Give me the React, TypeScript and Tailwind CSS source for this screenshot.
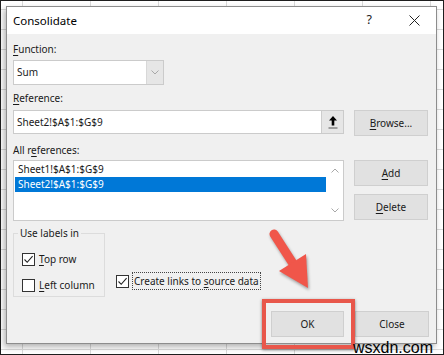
const ui = { fontFamily: '"Noto Sans", "Open Sans", sans-serif' };

function U({ children }: { children: string }) {
    return <span className="underline underline-offset-[2px] decoration-[1px]">{children}</span>;
}

function Check({ checked }: { checked: boolean }) {
    return (
        <div className="w-[13px] h-[13px] border border-[#333] bg-white flex items-center justify-center shrink-0">
            {checked && (
                <svg width="11" height="11" viewBox="0 0 11 11">
                    <path d="M1.5 5.5 L4.2 8.3 L9.6 2.2" fill="none" stroke="#222" strokeWidth="1.1" />
                </svg>
            )}
        </div>
    );
}

function Chevron({ up }: { up?: boolean }) {
    return (
        <svg width="8" height="5" viewBox="0 0 8 5">
            <path d={up ? "M0.5 4.5 L4 1 L7.5 4.5" : "M0.5 0.5 L4 4 L7.5 0.5"} fill="none" stroke="#a8a8a8" strokeWidth="1" />
        </svg>
    );
}

function Btn({ children, className = "" }: { children: React.ReactNode; className?: string }) {
    return (
        <div className={`h-[26px] bg-[#e1e1e1] border border-[#cfcfcf] flex items-center justify-center text-[10px] text-[#1a1a1a] ${className}`}>
            {children}
        </div>
    );
}

export default function App() {
    return (
        <div
            style={ui}
            className="relative w-[444px] h-[355px] overflow-hidden border border-[#1e1e1e] bg-white bg-[linear-gradient(to_right,#dadada_1px,transparent_1px),linear-gradient(to_bottom,#dadada_1px,transparent_1px)] [background-size:68px_20px] [background-position:21px_8px] pl-[5px] pt-[5px]"
        >
            {/* DIALOG */}
            <div className="w-[431px] h-[338px] border border-[#8d8d8d] bg-[#f0f0f0] flex flex-col shadow-[-2px_3px_6px_rgba(0,0,0,0.3)]">

                {/* TITLE BAR */}
                <div className="h-[27px] bg-white flex items-center pl-[6px] pr-[16px]">
                    <span className="text-[11.5px] text-black">Consolidate</span>
                    <span className="ml-auto text-[12.5px] text-[#222] mr-[37px]">?</span>
                    <svg width="11" height="11" viewBox="0 0 11 11">
                        <path d="M0.5 0.5 L10.5 10.5 M10.5 0.5 L0.5 10.5" stroke="#222" strokeWidth="1" />
                    </svg>
                </div>

                {/* BODY */}
                <div className="flex flex-col pl-[6px] pr-[7px] text-[10px] text-[#1a1a1a]">

                    <div className="mt-[8px] h-[14px] leading-[14px]"><U>F</U>unction:</div>

                    <div className="mt-[4px] w-[151px] h-[25px] bg-white border border-[#cbcbcb] flex">
                        <div className="flex-1 flex items-center pl-[3px]">Sum</div>
                        <div className="w-[17px] bg-[#e6e6e6] border-l border-[#d8d8d8] flex items-center justify-center">
                            <Chevron />
                        </div>
                    </div>

                    <div className="mt-[6px] h-[14px] leading-[14px]"><U>R</U>eference:</div>

                    <div className="mt-[5px] flex gap-[10px]">
                        <div className="w-[331px] h-[24px] bg-white border border-[#cbcbcb] flex">
                            <div className="flex-1 flex items-center pl-[3px]">Sheet2!$A$1:$G$9</div>
                            <div className="w-[22px] bg-[#e6e6e6] border-l border-[#cdcdcd] flex items-center justify-center">
                                <svg width="10" height="14" viewBox="0 0 10 14">
                                    <path d="M5 1 L9 5.5 L6.3 5.5 L6.3 10.5 L3.7 10.5 L3.7 5.5 L1 5.5 Z" fill="#000" />
                                    <path d="M0.5 13 L9.5 13" stroke="#555" strokeWidth="1" />
                                </svg>
                            </div>
                        </div>
                        <Btn className="w-[74px] h-[24px]"><U>B</U>rowse...</Btn>
                    </div>

                    <div className="mt-[7px] h-[14px] leading-[14px]">All r<U>e</U>ferences:</div>

                    <div className="mt-[3px] flex gap-[10px]">
                        <div className="w-[331px] h-[61px] bg-white border border-[#cbcbcb] flex">
                            <div className="flex-1 pt-[1px] pl-[1px]">
                                <div className="h-[15px] flex items-center pl-[3px]">Sheet1!$A$1:$G$9</div>
                                <div className="h-[15px] flex items-center pl-[3px] bg-[#0078d7] text-white">Sheet2!$A$1:$G$9</div>
                            </div>
                            <div className="w-[17px] flex flex-col items-center justify-between py-[7px]">
                                <Chevron up />
                                <Chevron />
                            </div>
                        </div>
                        <div className="flex flex-col gap-[8px]">
                            <Btn className="w-[74px]"><U>A</U>dd</Btn>
                            <Btn className="w-[74px]"><U>D</U>elete</Btn>
                        </div>
                    </div>

                    {/* LABELS GROUP */}
                    <div className="mt-[12px] flex items-end gap-[11px]">
                        <div className="relative w-[92px] h-[64px] border border-[#dcdcdc] flex flex-col pl-[8px] pt-[18px] gap-[11px]">
                            <span className="absolute -top-[8px] left-[4px] px-[2px] bg-[#f0f0f0] leading-[14px]">Use labels in</span>
                            <div className="flex items-center gap-[4px]">
                                <Check checked />
                                <span><U>T</U>op row</span>
                            </div>
                            <div className="flex items-center gap-[4px]">
                                <Check checked={false} />
                                <span><U>L</U>eft column</span>
                            </div>
                        </div>
                        <div className="flex items-center gap-[3px] mb-[7px]">
                            <Check checked />
                            <span className="border border-dotted border-[#444] px-[1px] h-[18px] leading-[16px]">
                                Create links to <U>s</U>ource data
                            </span>
                        </div>
                    </div>

                    {/* BUTTONS */}
                    <div className="mt-[14px] flex justify-end gap-[11px]">
                        <div className="relative">
                            <Btn className="w-[73px] border-[#0078d7]">OK</Btn>
                            <div className="absolute -left-[9px] -top-[12px] -right-[11px] -bottom-[12px] border-[4px] border-[#e8574b] shadow-[0_1px_3px_rgba(0,0,0,0.45)]" />
                        </div>
                        <Btn className="w-[74px]">Close</Btn>
                    </div>
                </div>
            </div>

            {/* RED ARROW */}
            <svg className="absolute left-[264px] top-[225px]" width="56" height="72" viewBox="0 0 56 72">
                <g style={{ filter: "drop-shadow(1px 2px 1.5px rgba(0,0,0,0.35))" }}>
                    <path d="M9 8 L27 36" stroke="#f0564a" strokeWidth="9" strokeLinecap="round" />
                    <path d="M14 45 L41 28 L43 62 Z" fill="#f0564a" />
                </g>
            </svg>

            {/* WATERMARK */}
            <span
                className="absolute right-[10px] bottom-[-3px] text-[16px] leading-[18px] text-black"
                style={{ fontFamily: '"Liberation Sans", Arial, sans-serif' }}
            >
                wsxdn.com
            </span>
        </div>
    );
}
